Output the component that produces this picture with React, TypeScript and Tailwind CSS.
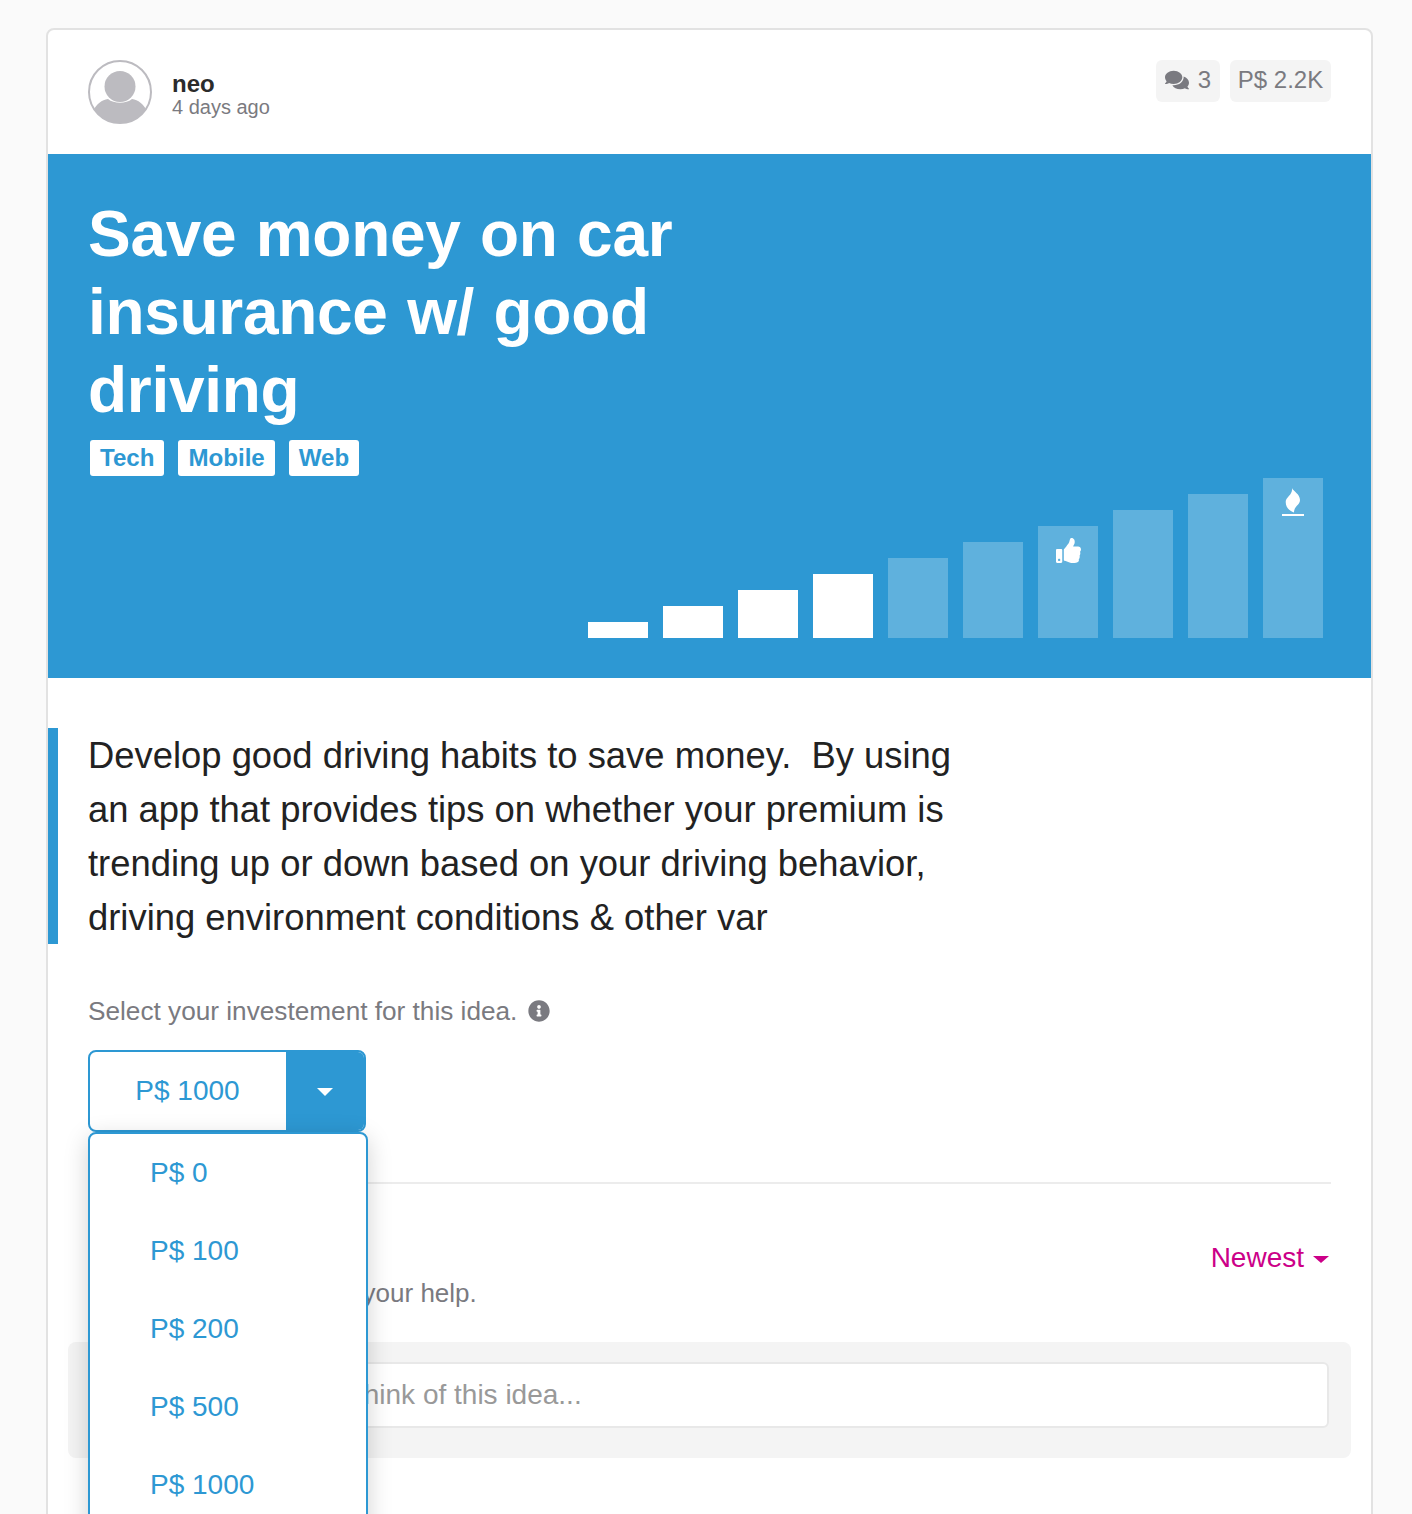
import { FaComments, FaInfoCircle, FaThumbsUp } from "react-icons/fa";

const bars = [16, 32, 48, 64, 80, 96, 112, 128, 144, 160];
const amounts = ["P$ 0", "P$ 100", "P$ 200", "P$ 500", "P$ 1000"];

function Avatar() {
  return (
    <svg viewBox="0 0 64 64" className="h-16 w-16 shrink-0">
      <defs>
        <clipPath id="avatar-clip">
          <circle cx="32" cy="32" r="31" />
        </clipPath>
      </defs>
      <circle cx="32" cy="32" r="31" fill="#fff" />
      <g clipPath="url(#avatar-clip)" fill="#bcbbc0">
        <circle cx="32" cy="26.5" r="15.5" />
        <path d="M6 64 V50 C8 44 14 40 20 39 C26 44 38 44 44 39 C50 40 56 44 58 50 V64 Z" />
      </g>
      <circle cx="32" cy="32" r="31" fill="none" stroke="#bcbbc0" strokeWidth="2" />
    </svg>
  );
}

function Flame() {
  return (
    <svg viewBox="0 0 22 28" className="h-7 w-[22px] text-white" fill="currentColor">
      <path d="M10 0 C11 3 18 6 18 12 C18 17 12 18 12 24.500 C8 23 3.700 20 3.700 14 C3.700 9 11 7 10 0 Z" />
      <rect x="0" y="26" width="22" height="2" />
    </svg>
  );
}

export default function App() {
  return (
    <div className="h-[1514px] overflow-hidden bg-[#fafafa] pl-[46px] pr-[39px] pt-[28px] font-['Liberation_Sans',Arial,sans-serif]">
      <div className="h-[1600px] rounded-lg border-2 border-[#e2e2e2] bg-white">
        {/* Header */}
        <div className="flex h-[124px] items-start justify-between pl-10 pr-10 pt-[30px]">
          <div className="flex items-center gap-5">
            <Avatar />
            <div className="pt-[6px]">
              <div className="text-[24px] leading-[24px] font-bold text-[#2b2b2b]">neo</div>
              <div className="text-[20px] leading-[22px] text-[#7a7a80]">4 days ago</div>
            </div>
          </div>
          <div className="flex gap-[10px]">
            <div className="flex h-[42px] w-[64px] items-center justify-center gap-[9px] rounded-md bg-[#f4f4f4] pb-[2px] text-[24px] text-[#7a7a80]">
              <FaComments className="text-[24px]" />
              <span>3</span>
            </div>
            <div className="flex h-[42px] w-[101px] items-center justify-center rounded-md bg-[#f4f4f4] pb-[2px] text-[24px] text-[#7a7a80]">
              P$ 2.2K
            </div>
          </div>
        </div>

        {/* Hero */}
        <div className="h-[524px] bg-[#2d98d3] pl-10 pr-12 pt-[41px]">
          <h1 className="w-[640px] text-[64px] leading-[78px] font-bold tracking-[-0.3px] text-white [word-spacing:2px]">
            Save money on car insurance w/ good driving
          </h1>
          <div className="ml-[2px] mt-[11px] flex gap-[14px]">
            {["Tech", "Mobile", "Web"].map((tag) => (
              <span
                key={tag}
                className="flex h-9 items-center rounded-[3px] bg-white px-[10px] text-[24.1px] font-bold text-[#2d98d3]"
              >
                {tag}
              </span>
            ))}
          </div>
          <div className="mt-[2px] flex h-[160px] items-end justify-end gap-[15px]">
            {bars.map((height, i) => (
              <div
                key={height}
                className={`flex w-[60px] justify-center pt-[10px] ${i < 4 ? "bg-white" : "bg-[#5fb1dd]"}`}
                style={{ height }}
              >
                {i === 6 && <FaThumbsUp className="mt-[2px] text-[25px] text-white" />}
                {i === 9 && <Flame />}
              </div>
            ))}
          </div>
        </div>

        {/* Description */}
        <div className="mt-[50px] h-[216px] border-l-[10px] border-[#2d98d3] pl-[30px] pt-px">
          <p className="w-[890px] whitespace-pre-wrap text-[36.4px] leading-[54px] text-[#222]">
            {"Develop good driving habits to save money.  By using an app that provides tips on whether your premium is trending up or down based on your driving behavior, driving environment conditions & other var"}
          </p>
        </div>

        {/* Investment */}
        <div className="px-10">
          <div className="mt-[50px] flex h-[34px] items-center gap-[11px] text-[26.2px] text-[#7a7a80]">
            <span className="pt-[2px]">Select your investement for this idea.</span>
            <FaInfoCircle className="text-[22px]" />
          </div>
          <div className="relative mt-[22px] w-[278px]">
            <div className="flex h-[82px] rounded-lg border-2 border-[#2d98d3]">
              <div className="flex flex-1 items-center justify-center pr-[1px] text-[28px] text-[#2d98d3]">
                P$ 1000
              </div>
              <div className="flex w-[78px] items-center justify-center rounded-r-md bg-[#2d98d3]">
                <span className="mt-[2px] border-x-[8px] border-t-[8px] border-x-transparent border-t-white" />
              </div>
            </div>
            <div className="absolute left-0 top-[82px] z-10 h-[600px] w-[280px] rounded-lg border-2 border-[#2d98d3] bg-white shadow-[0_6px_24px_rgba(0,0,0,0.18)]">
              {amounts.map((amount) => (
                <div
                  key={amount}
                  className="flex h-[78px] items-center pl-[60px] text-[28px] text-[#2d98d3]"
                >
                  {amount}
                </div>
              ))}
            </div>
          </div>
          <div className="mt-[50px] border-t-2 border-[#ececec]" />

          {/* Comments */}
          <div className="mt-[53px] flex items-start justify-between">
            <div>
              <div className="text-[28px] leading-[34px] font-bold text-[#2b2b2b]">Comments</div>
              <div className="mt-[5px] text-[26px] leading-[34px] text-[#7a7a80]">
                The idea creator needs your help.
              </div>
            </div>
            <div className="mt-[4px] flex items-center gap-[9px] pr-[2px] text-[28px] leading-[34px] text-[#cc0088]">
              <span>Newest</span>
              <span className="mt-[2px] border-x-[8px] border-t-[7px] border-x-transparent border-t-[#cc0088]" />
            </div>
          </div>
        </div>
        <div className="mx-5 mt-[32px] h-[116px] rounded-lg bg-[#f4f4f4] pl-5 pr-[22px] pt-5">
          <div className="flex h-[66px] items-center rounded-md border-2 border-[#e8e8e8] bg-white pl-[101px] text-[28px] text-[#999]">
            What do you think of this idea...
          </div>
        </div>
      </div>
    </div>
  );
}
